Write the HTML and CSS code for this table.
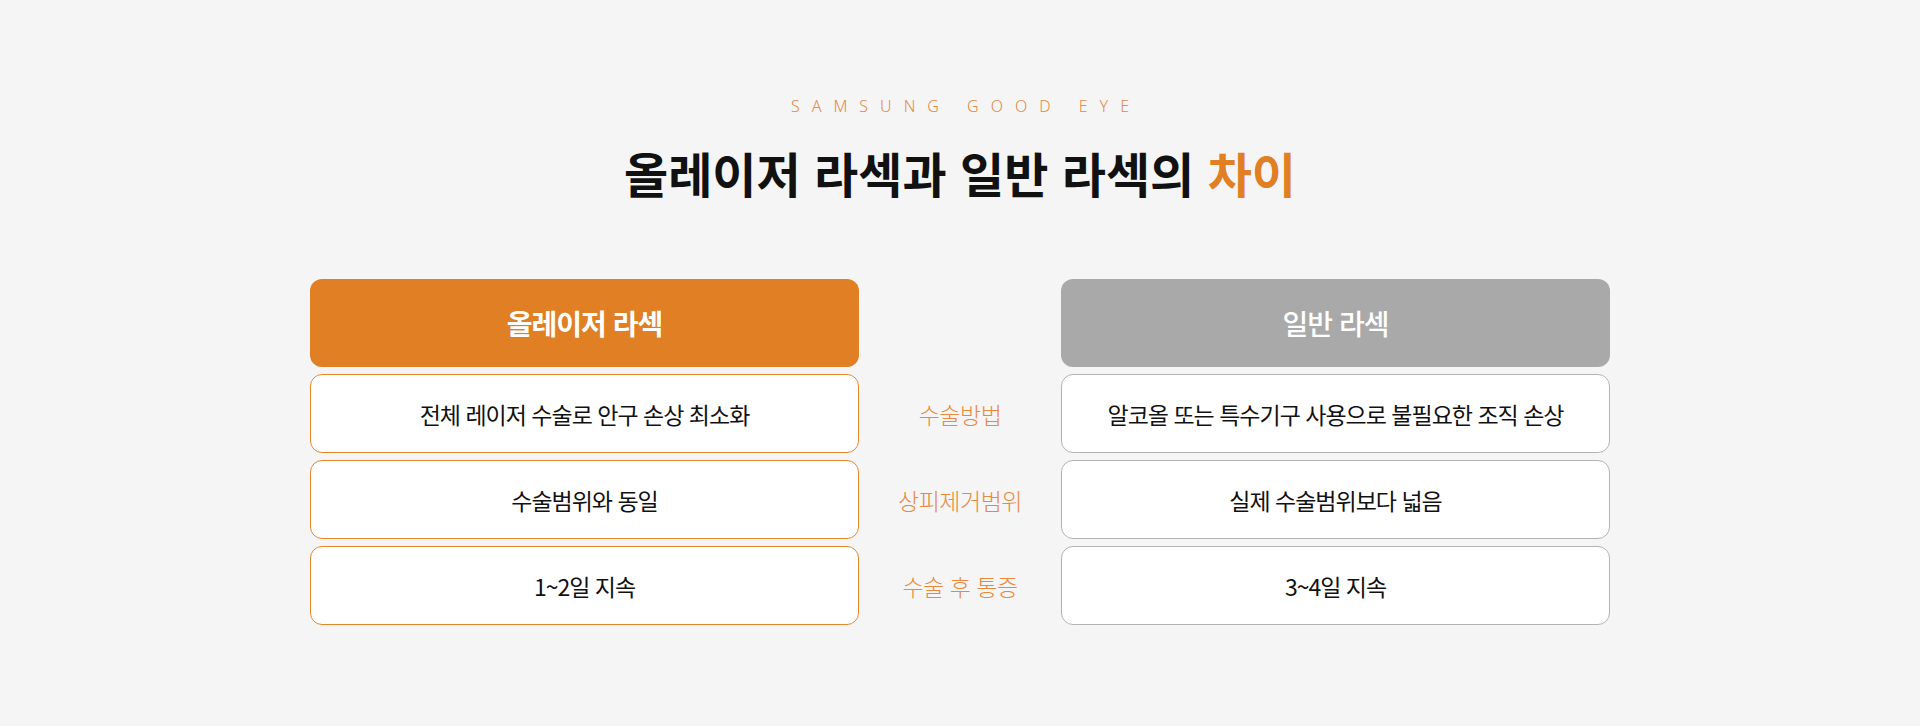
FILE: index.html
```html
<!DOCTYPE html>
<html lang="ko">
<head>
<meta charset="utf-8">
<title>올레이저 라섹과 일반 라섹의 차이</title>
<link rel="stylesheet" href="styles.css">
</head>
<body>
<section class="compare">
  <p class="eyebrow">SAMSUNG GOOD EYE</p>
  <h2 class="title">올레이저 라섹과 일반 라섹의 <em>차이</em></h2>
  <div class="table">
    <div class="head head-main">올레이저 라섹</div>
    <div class="spacer"></div>
    <div class="head head-sub">일반 라섹</div>

    <div class="cell cell-main">전체 레이저 수술로 안구 손상 최소화</div>
    <div class="label">수술방법</div>
    <div class="cell cell-sub">알코올 또는 특수기구 사용으로 불필요한 조직 손상</div>

    <div class="cell cell-main">수술범위와 동일</div>
    <div class="label">상피제거범위</div>
    <div class="cell cell-sub">실제 수술범위보다 넓음</div>

    <div class="cell cell-main">1~2일 지속</div>
    <div class="label">수술 후 통증</div>
    <div class="cell cell-sub">3~4일 지속</div>
  </div>
</section>
</body>
</html>
```

FILE: styles.css
```css
* { box-sizing: border-box; }
html, body { margin: 0; padding: 0; }
body {
  background: #f5f5f5;
  font-family: "Noto Sans CJK KR", "Noto Sans", sans-serif;
  color: #111;
  height: 726px;
}
.compare {
  display: flex;
  flex-direction: column;
  align-items: center;
  padding-top: 96px;
}
.eyebrow {
  margin: 0;
  font-family: "Noto Sans", sans-serif;
  font-weight: 300;
  font-size: 16px;
  line-height: 20px;
  letter-spacing: 0.75em;
  padding-left: 0.75em;
  color: #e28a46;
}
.title {
  margin: 24px 0 0;
  font-size: 48px;
  line-height: 64px;
  font-weight: 700;
  letter-spacing: 0;
  color: #111;
}
.title em {
  font-style: normal;
  color: #e07f24;
}
.table {
  margin-top: 75px;
  display: grid;
  grid-template-columns: 549px 202px 549px;
  grid-template-rows: 88px 79px 79px 79px;
  row-gap: 7px;
}
.head {
  display: flex;
  align-items: center;
  justify-content: center;
  border-radius: 12px;
  color: #fff;
  font-size: 28px;
  letter-spacing: -1px;
}
.head-main { background: #e07f24; font-weight: 700; }
.head-sub { background: #a9a9a9; font-weight: 500; }
.cell {
  display: flex;
  align-items: center;
  justify-content: center;
  background: #fff;
  border-radius: 12px;
  font-size: 23px;
  font-weight: 400;
  letter-spacing: -1px;
  color: #111;
}
.cell-main { border: 1px solid #e6872e; }
.cell-sub { border: 1px solid #b3b3b3; }
.label {
  display: flex;
  align-items: center;
  justify-content: center;
  font-size: 23px;
  font-weight: 300;
  letter-spacing: -0.5px;
  color: #e8893e;
}
```
